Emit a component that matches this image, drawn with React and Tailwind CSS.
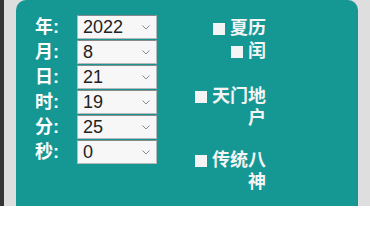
import React from 'react';

const rows = [
  { label: '年', value: '2022' },
  { label: '月', value: '8' },
  { label: '日', value: '21' },
  { label: '时', value: '19' },
  { label: '分', value: '25' },
  { label: '秒', value: '0' },
];

const font = { fontFamily: '"Liberation Sans", "Noto Sans CJK SC", sans-serif' };

function Box() {
  return <span className="inline-block w-[12px] h-[12px] bg-[#f4f4f4] mr-[5px] align-[-1px]" />;
}

function Picker({ value }) {
  return (
    <div className="relative w-[80px] h-[24px]">
      <select
        defaultValue={value}
        className="appearance-none w-full h-full bg-[#f7f7f7] border border-[#b8b8b8] border-t-[#8a8a8a] pl-[5px] text-[18px] leading-[22px] text-[#222] outline-none"
      >
        <option value={value}>{value}</option>
      </select>
      <svg className="absolute right-[7px] top-[10px] pointer-events-none" width="8" height="5" viewBox="0 0 8 5">
        <path d="M0.5 0.5 L4 4 L7.5 0.5" fill="none" stroke="#8a8a8a" strokeWidth="1" />
      </svg>
    </div>
  );
}

export default function App() {
  return (
    <div className="w-[370px] h-[206px] flex overflow-hidden bg-[#dedede]" style={font}>
      <div className="w-[4px] bg-[#353535]" />
      <div className="w-[12px]" />
      <div className="flex-1 mr-[12px] bg-[#159794] rounded-t-[10px] flex pt-[15px] pl-[19px]">
        {/* date pickers */}
        <div className="flex flex-col gap-[1px]">
          {rows.map((r) => (
            <div key={r.label} className="flex items-center h-[24px]">
              <span className="w-[42px] text-white text-[18px] font-bold leading-[24px]">{r.label}:</span>
              <Picker value={r.value} />
            </div>
          ))}
        </div>

        {/* options */}
        <div className="ml-[33px] w-[76px] text-right text-[#f4f4f4] text-[18px] font-bold leading-[22px]">
          <div className="h-[25px] pt-[2px]"><Box />夏历</div>
          <div className="h-[25px]"><Box />闰</div>
          <div className="mt-[20px]"><Box />天门地户</div>
          <div className="mt-[20px]"><Box />传统八神</div>
        </div>
      </div>
    </div>
  );
}
